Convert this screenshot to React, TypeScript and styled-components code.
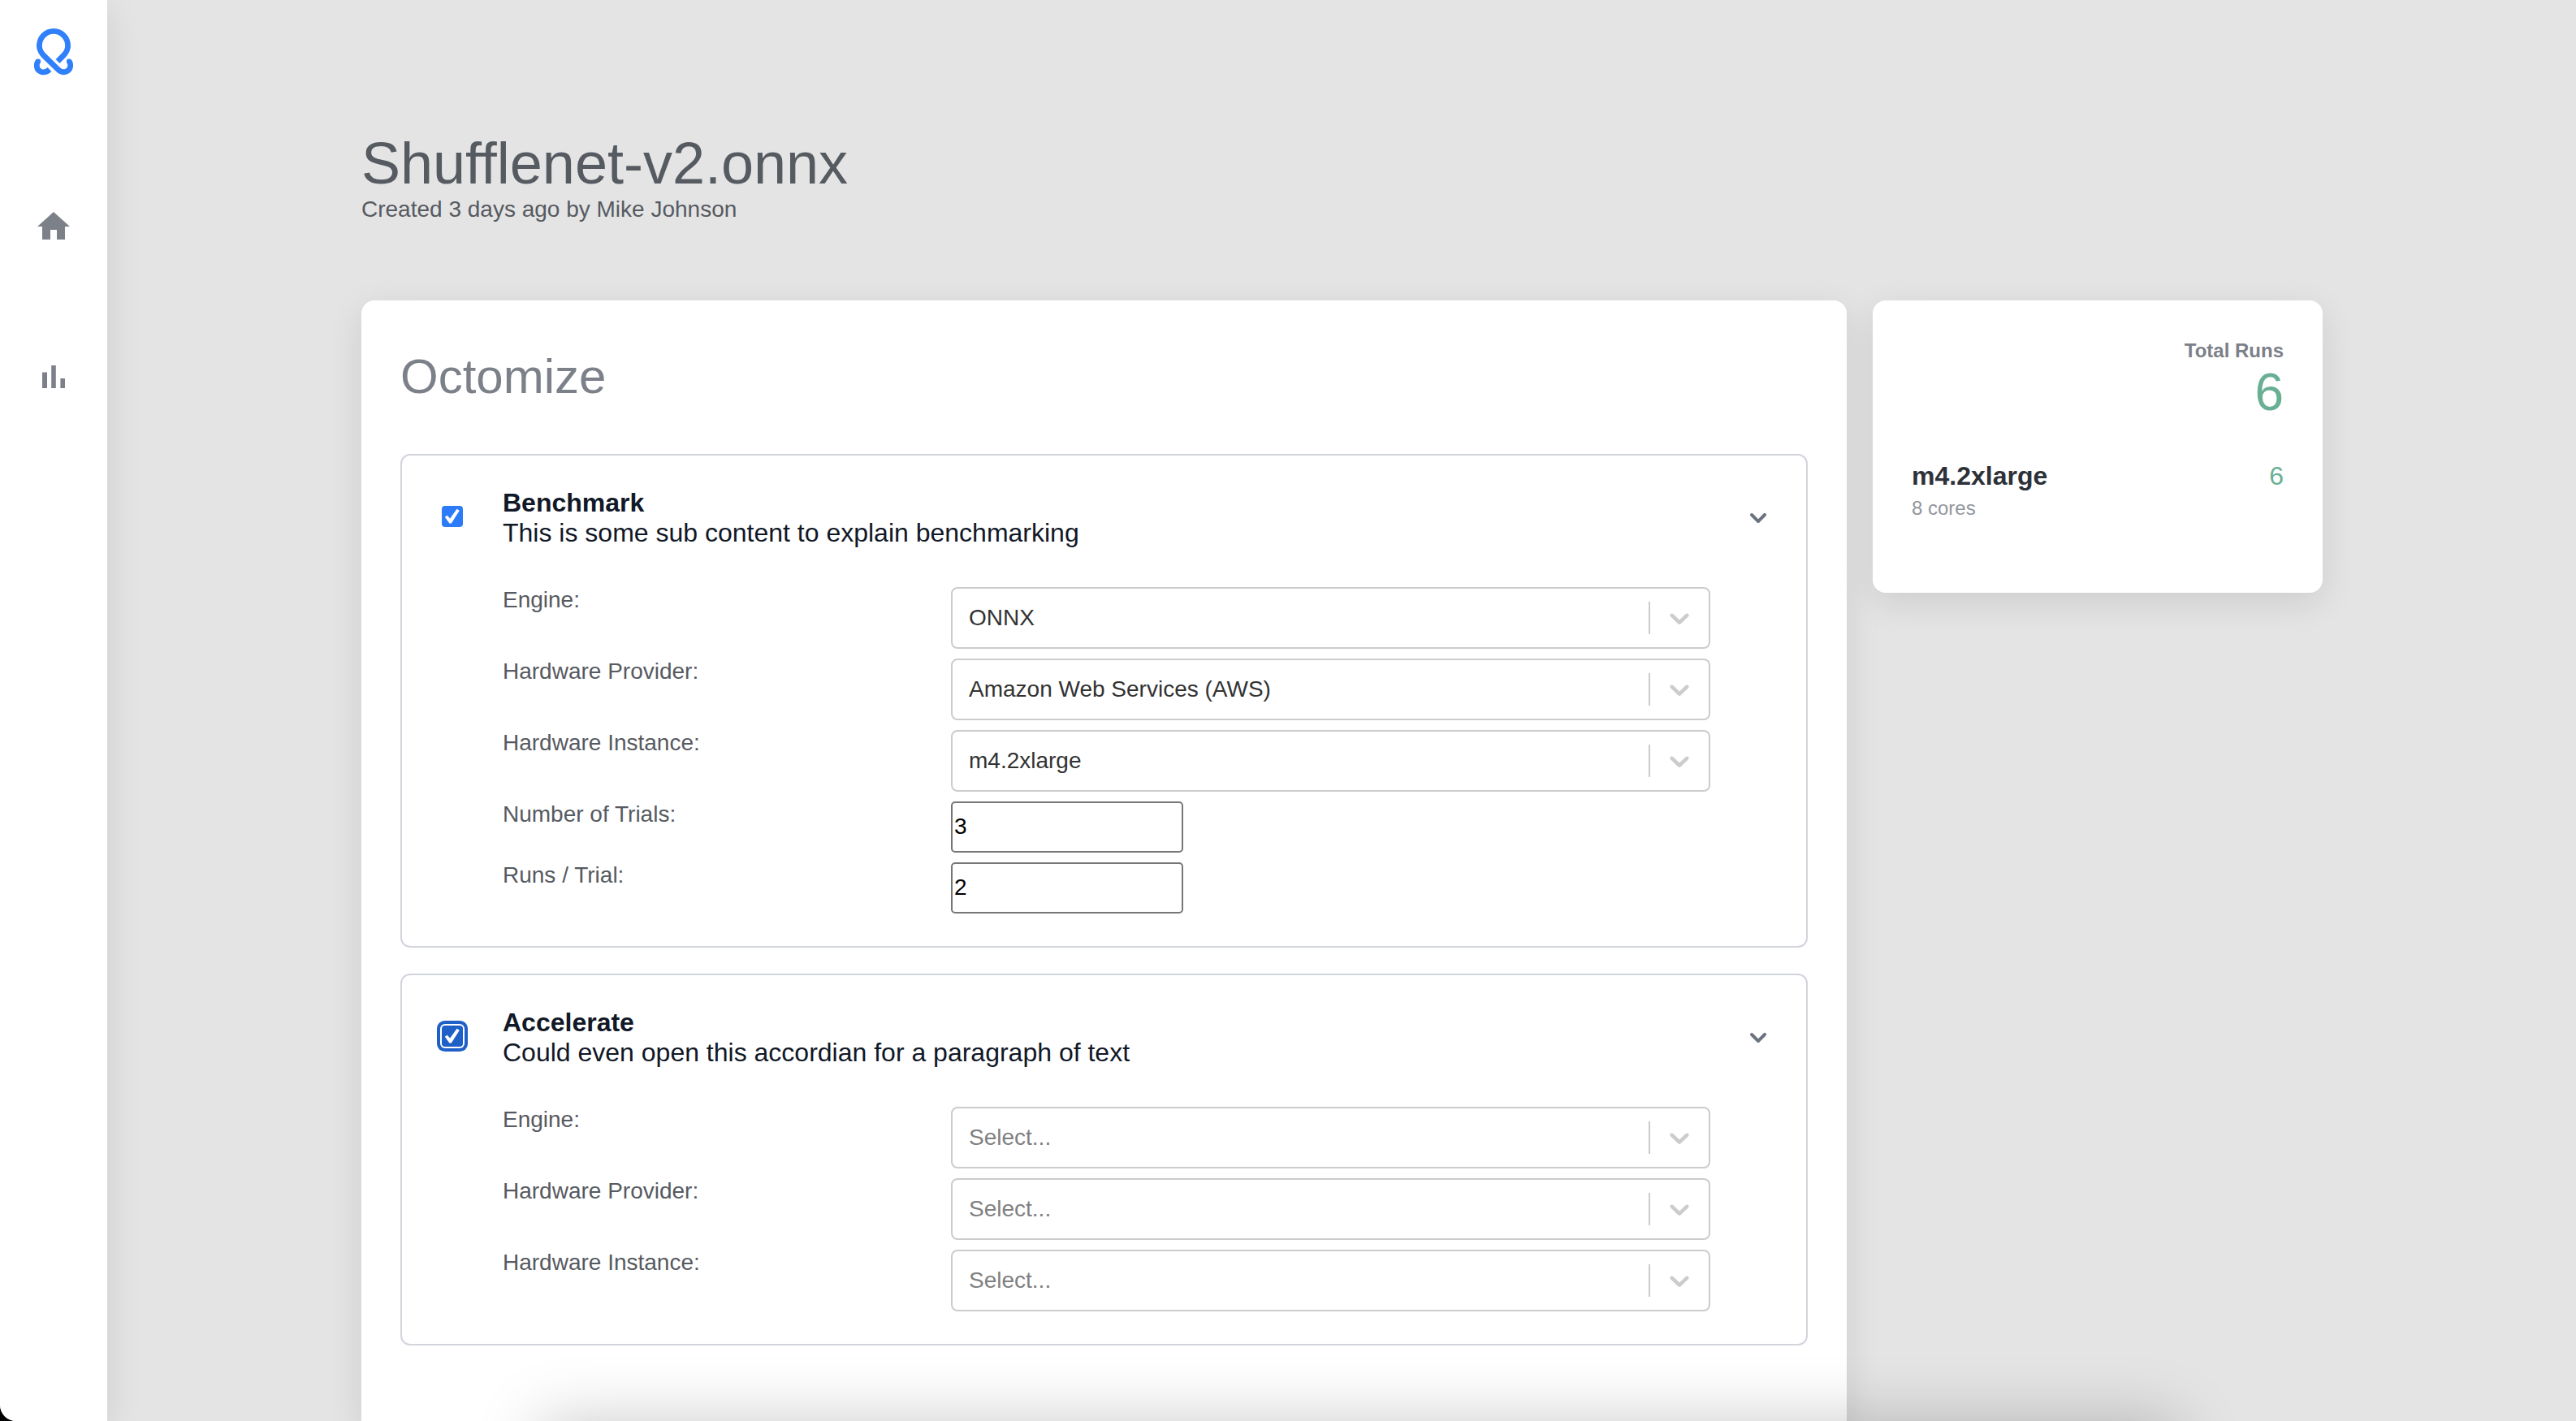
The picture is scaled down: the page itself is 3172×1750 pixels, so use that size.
import React, { useState } from 'react';
import styled, { createGlobalStyle } from 'styled-components';

const GlobalStyle = createGlobalStyle`
  * { box-sizing: border-box; }
  html { background: #000; }
  body {
    margin: 0;
    font-family: "Liberation Sans", Arial, Helvetica, sans-serif;
    font-size: 28px;
    color: #565a61;
  }
  h1, h2, h3, p { margin: 0; font-weight: 400; }
`;

const Shell = styled.div`
  display: flex;
  min-height: 100vh;
  background: #e4e4e4;
  border-bottom-left-radius: 20px;
  overflow: hidden;
`;

const Sidebar = styled.nav`
  flex: none;
  display: flex;
  flex-direction: column;
  align-items: center;
  width: 132px;
  padding-top: 35px;
  background: #fff;
  box-shadow: 0 12px 44px rgba(0, 0, 0, 0.1);
`;

const NavLink = styled.a<{ $gap: number }>`
  display: block;
  height: 48px;
  margin-top: ${(p) => p.$gap}px;
  color: #7c8089;
`;

const LogoLink = styled.a`
  display: block;
  height: 60px;
`;

const Main = styled.main`
  flex: 1;
  min-width: 0;
  padding: 160px 312px 0 313px;
`;

const PageHeader = styled.header`
  margin-bottom: 96px;
`;

const PageTitle = styled.h1`
  font-size: 72px;
  line-height: 82px;
`;

const PageMeta = styled.p`
  line-height: 32px;
`;

const Columns = styled.div`
  display: flex;
  align-items: flex-start;
  gap: 32px;
`;

const Card = styled.section`
  padding: 48px;
  border-radius: 16px;
  background: #fff;
  box-shadow: 0 12px 44px rgba(0, 0, 0, 0.1);
`;

const OctomizeCard = styled(Card)`
  flex: 1;
  min-width: 0;
  min-height: calc(100vh - 370px);
  border-bottom-left-radius: 0;
  border-bottom-right-radius: 0;
`;

const CardTitle = styled.h2`
  margin-bottom: 49px;
  font-size: 60px;
  line-height: 92px;
  color: #7c8089;
`;

const Panels = styled.div`
  display: flex;
  flex-direction: column;
  gap: 32px;
`;

const Panel = styled.section`
  padding: 40px;
  border: 2px solid #d1d5db;
  border-radius: 12px;
`;

const PanelHeader = styled.div`
  display: flex;
  align-items: center;
  margin-right: -1px;
  color: #111827;
  font-size: 32px;
  line-height: 37px;
`;

const PanelLabel = styled.label`
  flex: 1;
`;

const PanelName = styled.strong`
  display: block;
`;

const CheckCell = styled.span`
  flex: none;
  width: 84px;
  height: 30px;
  padding-left: 9px;
`;

const Checkbox = styled.input<{ $focused?: boolean }>`
  appearance: none;
  display: grid;
  place-items: center;
  width: 26px;
  height: 26px;
  margin: 0;
  border-radius: 4px;
  outline: none;
  background: ${(p) => (p.$focused ? '#1f5fc8' : '#fff')};
  box-shadow: ${(p) => (p.$focused ? '0 0 0 2px #fff, 0 0 0 6px #1f5fc8' : 'inset 0 0 0 2px #767676')};
  &:checked {
    background: ${(p) => (p.$focused ? '#1f5fc8' : '#2d7bf8')};
    box-shadow: ${(p) => (p.$focused ? '0 0 0 2px #fff, 0 0 0 6px #1f5fc8' : 'none')};
  }
  &:checked::before {
    content: "";
    width: 20px;
    height: 20px;
    background: #fff;
    clip-path: polygon(4% 54%, 18% 44%, 36% 62%, 78% 4%, 94% 14%, 44% 92%, 32% 92%);
  }
`;

const ToggleButton = styled.button`
  display: block;
  width: 40px;
  height: 40px;
  padding: 0;
  border: 0;
  background: none;
  color: #6b7280;
`;

const Fields = styled.div`
  display: flex;
  flex-direction: column;
  gap: 12px;
  margin-top: 48px;
  padding: 0 78px 0 84px;
`;

const Field = styled.div`
  display: flex;
  align-items: flex-start;
`;

const FieldLabel = styled.label`
  flex: none;
  width: 552px;
  line-height: 32px;
`;

const SelectBox = styled.div`
  flex: 1;
  display: grid;
  height: 76px;
  border: 2px solid #ccc;
  border-radius: 8px;
  background: #fff;
  & > * { grid-area: 1 / 1; }
`;

const Select = styled.select<{ $empty: boolean }>`
  appearance: none;
  width: 100%;
  padding: 0 96px 2px 20px;
  border: 0;
  border-radius: 6px;
  background: none;
  font: inherit;
  color: ${(p) => (p.$empty ? '#808080' : '#333')};
`;

const Indicator = styled.span`
  display: flex;
  align-items: center;
  align-self: center;
  justify-self: end;
  height: 40px;
  margin-right: 16px;
  padding-left: 16px;
  border-left: 2px solid #ccc;
  color: #ccc;
  pointer-events: none;
`;

const NumberInput = styled.input`
  width: 286px;
  height: 63px;
  padding: 0 2px 2px;
  border: 2px solid #767676;
  border-radius: 5px;
  background: #fff;
  font: inherit;
  color: #000;
`;

const SummaryCard = styled(Card)`
  flex: none;
  width: 554px;
  padding-bottom: 90px;
`;

const Total = styled.div`
  margin-bottom: 48px;
  text-align: right;
`;

const TotalLabel = styled.h3`
  font-size: 24px;
  font-weight: 700;
  line-height: 28px;
  color: #7c8089;
`;

const TotalValue = styled.p`
  font-size: 64px;
  line-height: 74px;
  color: #69af94;
`;

const InstanceRow = styled.div`
  display: flex;
  justify-content: space-between;
  font-size: 32px;
  line-height: 37px;
`;

const InstanceName = styled.strong`
  color: #2d3138;
`;

const InstanceRuns = styled.span`
  color: #69af94;
`;

const InstanceInfo = styled.p`
  margin-top: 7px;
  font-size: 24px;
  line-height: 28px;
  color: #92959c;
`;

const BottomShade = styled.div`
  position: fixed;
  top: 100%;
  left: 664px;
  right: 490px;
  height: 120px;
  box-shadow: 0 0 80px rgba(0, 0, 0, 0.21);
  pointer-events: none;
`;

function Logo() {
  return (
    <svg width="48" height="58" viewBox="0 0 48 58" fill="none" stroke="#2f80fa" strokeWidth="6.8">
      <path d="M29 40.5 L35.5 34 C39.5 30 41.6 26.5 41.6 21.5 A17.6 18.1 0 0 0 6.4 21.5 C6.4 26.5 8.5 30 12.5 34 L29.5 50.5 C35 56.5 44.7 53.5 44.7 45.5 C44.7 43.5 44 41.5 43.2 40.5" />
      <path d="M4.8 40.5 C4 41.5 3.3 43.5 3.3 45.5 C3.3 54 13 56.5 19 50.5" />
      <circle cx="4.9" cy="40.6" r="3.2" fill="#2f80fa" stroke="none" />
      <circle cx="43.1" cy="40.6" r="3.2" fill="#2f80fa" stroke="none" />
    </svg>
  );
}

function NavIcon({ path }: { path: string }) {
  return (
    <svg width="48" height="48" viewBox="0 0 24 24" fill="currentColor">
      <path d={path} />
    </svg>
  );
}

const HOME = 'M10 20v-6h4v6h5v-8h3L12 3 2 12h3v8z';
const CHART = 'M5 9.2h3V19H5zM10.6 5h2.8v14h-2.8zm5.6 8H19v6h-2.8z';
const SELECT_ARROW =
  'M4.516 7.548c0.436-0.446 1.043-0.481 1.576 0l3.908 3.747 3.908-3.747c0.533-0.481 1.141-0.446 1.574 0 0.436 0.445 0.408 1.197 0 1.615-0.406 0.418-4.695 4.502-4.695 4.502-0.217 0.223-0.502 0.335-0.787 0.335s-0.57-0.112-0.789-0.335c0 0-4.287-4.084-4.695-4.502s-0.436-1.17 0-1.615z';
const PANEL_ARROW =
  'M5.293 7.293a1 1 0 011.414 0L10 10.586l3.293-3.293a1 1 0 111.414 1.414l-4 4a1 1 0 01-1.414 0l-4-4a1 1 0 010-1.414z';

function Arrow({ path }: { path: string }) {
  return (
    <svg width="40" height="40" viewBox="0 0 20 20" fill="currentColor" aria-hidden="true">
      <path d={path} />
    </svg>
  );
}

function SelectField({ id, label, value }: { id: string; label: string; value?: string }) {
  const text = value ?? 'Select...';
  return (
    <Field>
      <FieldLabel htmlFor={id}>{label}</FieldLabel>
      <SelectBox>
        <Select id={id} $empty={!value} defaultValue={text}>
          <option>{text}</option>
        </Select>
        <Indicator>
          <Arrow path={SELECT_ARROW} />
        </Indicator>
      </SelectBox>
    </Field>
  );
}

function NumberField({ id, label, value }: { id: string; label: string; value: string }) {
  return (
    <Field>
      <FieldLabel htmlFor={id}>{label}</FieldLabel>
      <NumberInput id={id} inputMode="numeric" defaultValue={value} />
    </Field>
  );
}

interface OptionPanelProps {
  id: string;
  name: string;
  description: string;
  focused?: boolean;
  children: React.ReactNode;
}

function OptionPanel({ id, name, description, focused, children }: OptionPanelProps) {
  const [open, setOpen] = useState(true);
  return (
    <Panel>
      <PanelHeader>
        <CheckCell>
          <Checkbox type="checkbox" id={id} defaultChecked $focused={focused} />
        </CheckCell>
        <PanelLabel htmlFor={id}>
          <PanelName>{name}</PanelName>
          {description}
        </PanelLabel>
        <ToggleButton type="button" aria-label={`Toggle ${name}`} aria-expanded={open} onClick={() => setOpen(!open)}>
          <Arrow path={PANEL_ARROW} />
        </ToggleButton>
      </PanelHeader>
      {open && <Fields>{children}</Fields>}
    </Panel>
  );
}

export default function App() {
  return (
    <>
      <GlobalStyle />
      <Shell>
        <Sidebar>
          <LogoLink href="#" aria-label="OctoML">
            <Logo />
          </LogoLink>
          <NavLink href="#home" aria-label="Home" $gap={160}>
            <NavIcon path={HOME} />
          </NavLink>
          <NavLink href="#stats" aria-label="Statistics" $gap={137}>
            <NavIcon path={CHART} />
          </NavLink>
        </Sidebar>
        <Main>
          <PageHeader>
            <PageTitle>Shufflenet-v2.onnx</PageTitle>
            <PageMeta>Created 3 days ago by Mike Johnson</PageMeta>
          </PageHeader>
          <Columns>
            <OctomizeCard>
              <CardTitle>Octomize</CardTitle>
              <Panels>
                <OptionPanel id="benchmark" name="Benchmark" description="This is some sub content to explain benchmarking">
                  <SelectField id="b-engine" label="Engine:" value="ONNX" />
                  <SelectField id="b-provider" label="Hardware Provider:" value="Amazon Web Services (AWS)" />
                  <SelectField id="b-instance" label="Hardware Instance:" value="m4.2xlarge" />
                  <NumberField id="b-trials" label="Number of Trials:" value="3" />
                  <NumberField id="b-runs" label="Runs / Trial:" value="2" />
                </OptionPanel>
                <OptionPanel id="accelerate" name="Accelerate" description="Could even open this accordian for a paragraph of text" focused>
                  <SelectField id="a-engine" label="Engine:" />
                  <SelectField id="a-provider" label="Hardware Provider:" />
                  <SelectField id="a-instance" label="Hardware Instance:" />
                </OptionPanel>
              </Panels>
            </OctomizeCard>
            <SummaryCard>
              <Total>
                <TotalLabel>Total Runs</TotalLabel>
                <TotalValue>6</TotalValue>
              </Total>
              <InstanceRow>
                <InstanceName>m4.2xlarge</InstanceName>
                <InstanceRuns>6</InstanceRuns>
              </InstanceRow>
              <InstanceInfo>8 cores</InstanceInfo>
            </SummaryCard>
          </Columns>
        </Main>
      </Shell>
      <BottomShade />
    </>
  );
}
